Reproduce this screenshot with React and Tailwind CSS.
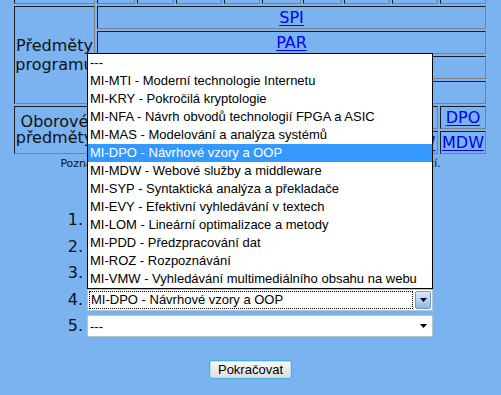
const cell =
  "overflow-hidden border border-t-[#1c1c1c] border-l-[#1c1c1c] border-r-[#808080] border-b-[#808080]";

const linkClass =
  "text-[16px] leading-none text-[#0000ee] underline underline-offset-[2px] decoration-1";

const options = [
  "---",
  "MI-MTI - Moderní technologie Internetu",
  "MI-KRY - Pokročilá kryptologie",
  "MI-NFA - Návrh obvodů technologií FPGA a ASIC",
  "MI-MAS - Modelování a analýza systémů",
  "MI-DPO - Návrhové vzory a OOP",
  "MI-MDW - Webové služby a middleware",
  "MI-SYP - Syntaktická analýza a překladače",
  "MI-EVY - Efektivní vyhledávání v textech",
  "MI-LOM - Lineární optimalizace a metody",
  "MI-PDD - Předzpracování dat",
  "MI-ROZ - Rozpoznávání",
  "MI-VMW - Vyhledávání multimediálního obsahu na webu",
];

const programmes = ["SPI", "PAR", "WSI", "ZNR"];
const rowA = ["MTI", "KRY", "NFA", "MAS", "SYP", "EVY", "LOM", "ROZ", "DPO"];
const rowB = ["PDD", "SIB", "ITP", "BPS", "SSU", "TSP", "PSI", "VMW", "MDW"];

const selected = ["MI-MTI - Moderní technologie Internetu", "MI-KRY - Pokročilá kryptologie", "MI-VMW - Vyhledávání multimediálního obsahu na webu", "MI-DPO - Návrhové vzory a OOP", "---"];

const Arrow = () => (
  <svg width="7" height="4" viewBox="0 0 7 4">
    <polygon points="0,0 7,0 3.5,4" fill="#000" />
  </svg>
);

const SelectBox = ({ value, open }) => (
  <div className="relative flex h-[22px] w-[346px] items-stretch border border-[#b5c2cf] bg-white font-['Liberation_Sans',sans-serif] text-[13px] text-black">
    {open ? (
      <>
        <div className="m-px flex flex-1 items-center border border-dotted border-black pl-px leading-none">
          {value}
        </div>
        <div className="my-px mr-px ml-px flex w-[16px] items-center justify-center rounded-[2px] border border-[#6f9bd1] bg-gradient-to-b from-[#dcebfc] to-[#8fb8e8]">
          <Arrow />
        </div>
        <ul className="absolute bottom-[calc(100%+1px)] left-[-1px] z-10 w-[346px] border border-black bg-white">
          {options.map((opt) => (
            <li
              key={opt}
              className={`h-[18px] whitespace-nowrap px-[2px] leading-[18px] ${
                opt === value ? "bg-[#3399ff] text-white" : "text-black"
              }`}
            >
              {opt}
            </li>
          ))}
        </ul>
      </>
    ) : (
      <>
        <div className="flex flex-1 items-center pl-[2px] leading-none">{value}</div>
        <div className="flex w-[17px] items-center justify-center">
          <Arrow />
        </div>
      </>
    )}
  </div>
);

export default function App() {
  return (
    <div className="h-[395px] overflow-hidden bg-[#7ab3f0] font-['DejaVu_Sans',sans-serif] text-[#111]">
      <div className="ml-[14px] mt-[-19px] grid grid-cols-[81px_38px_37px_46px_36px_39px_39px_46px_46px_46px] grid-rows-[repeat(7,23px)] gap-[2px]">
        {Array.from({ length: 10 }).map((_, i) => (
          <div key={`h${i}`} className={cell} />
        ))}
        <div className={`${cell} row-span-4 flex items-center justify-center text-center text-[16px] leading-[19px]`}>
          Předměty programu
        </div>
        {programmes.map((p) => (
          <div key={p} className={`${cell} col-span-9 flex items-center justify-center`}>
            <a href="#" className={linkClass}>
              {p}
            </a>
          </div>
        ))}
        <div className={`${cell} row-span-2 flex items-center justify-center text-center text-[16px] leading-[16px]`}>
          Oborové předměty
        </div>
        {[...rowA, ...rowB].map((code, i) => (
          <div key={`${code}${i}`} className={`${cell} flex items-center justify-center`}>
            <a href="#" className={linkClass}>
              {code}
            </a>
          </div>
        ))}
      </div>

      <p className="mt-[2px] text-center text-[10.9px] leading-[16px] whitespace-nowrap">
        Poznámka: vyberte prosím předměty v pořadí podle svých preferencí.
      </p>

      <ol className="mt-[35px]">
        {selected.map((value, i) => (
          <li key={i} className="flex h-[26.5px] items-center">
            <span className="w-[83px] text-right text-[16px] leading-none">{i + 1}.</span>
            <div className="ml-[4px]">
              <SelectBox value={value} open={i === 3} />
            </div>
          </li>
        ))}
      </ol>

      <div className="mt-[20px] flex justify-center">
        <button
          type="button"
          className="h-[19px] w-[83px] rounded-[3px] border border-[#45b0e0] bg-gradient-to-b from-[#fafafa] to-[#dcdcdc] font-['Liberation_Sans',sans-serif] text-[13px] leading-none text-black shadow-[inset_0_0_0_1px_#b8e4f8]"
        >
          Pokračovat
        </button>
      </div>
    </div>
  );
}
